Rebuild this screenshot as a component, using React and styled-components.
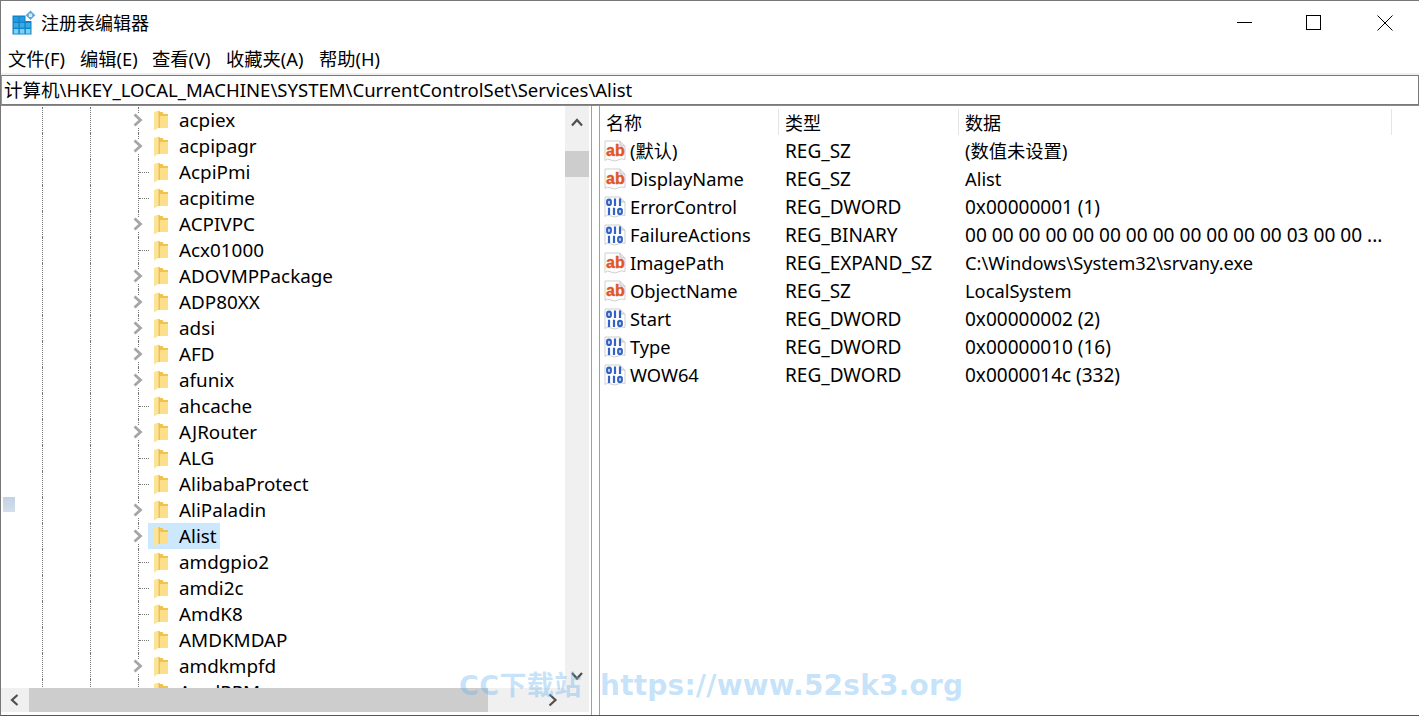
import React from "react";
import styled, { createGlobalStyle } from "styled-components";

const Global = createGlobalStyle`
  html, body { margin: 0; padding: 0; background: #fff; overflow: hidden; }
  * { box-sizing: border-box; }
`;
const FONT = `"Noto Sans", "Noto Sans CJK SC", sans-serif`;

const Window = styled.div`
  position: relative; width: 1419px; height: 716px; overflow: hidden;
  display: flex; flex-direction: column; background: #fff; color: #000;
  font-family: ${FONT};
  border-top: 1px solid #777; border-left: 1px solid #777; border-bottom: 1px solid #555;
`;
const TitleBar = styled.div`height: 43px; display: flex; align-items: center; padding-left: 11px; flex: none;`;
const Title = styled.div`margin-left: 5px; font-size: 18px; line-height: 24px; flex: 1;`;
const Controls = styled.div`display: grid; grid-template-columns: 69px 71px 16px; align-items: center; padding-right: 26px;`;
const MenuBar = styled.div`height: 29px; display: flex; align-items: center; padding-left: 7px; flex: none; background: #fff;`;
const MenuItem = styled.div`font-size: 18.3px; line-height: 24px; width: ${p => p.$w}px; white-space: nowrap;`;
const Strip = styled.div`height: 2px; background: #f0f0f0; flex: none;`;
const Address = styled.div`
  height: 30px; flex: none; border: 1px solid #7a7a7a; border-left-color: #999;
  font-size: 18.55px; line-height: 28px; padding-left: 2px; white-space: nowrap; background: #fff;
`;
const Panes = styled.div`flex: 1; min-height: 0; display: flex; border-top: 1px solid #8a8a8a;`;
const TreePane = styled.div`
  width: 591px; flex: none; border-right: 1px solid #a0a0a0; display: grid;
  grid-template-columns: 564px 24px 2px; grid-template-rows: 582px 24px 1fr;
`;
const Tree = styled.div`overflow: hidden; padding-left: 41px; padding-top: 1px;`;
const Row = styled.div`height: 26px; display: flex; align-items: stretch;`;
const Guide = styled.div`width: 48px; flex: none; border-left: 1px dotted #777;`;
const Elbow = styled.div`
  width: 10px; flex: none; position: relative; border-left: 1px dotted #777;
  &::after {
    content: ""; display: ${p => p.$branch ? "none" : "block"};
    position: absolute; left: 0; top: 13px; width: 10px; border-top: 1px dotted #777;
  }
`;
const Expander = styled.div`position: absolute; left: -7px; top: 6px; background: #fff; line-height: 0;`;
const Label = styled.div`
  display: flex; align-items: center; height: 26px; padding: 0 3px 0 6px;
  background: ${p => p.$sel ? "#cce8ff" : "transparent"};
`;
const LabelText = styled.span`margin-left: 11px; font-size: 18.85px; line-height: 26px; white-space: nowrap;`;
const VScroll = styled.div`
  background: #f0f0f0; display: flex; flex-direction: column; align-items: center; grid-column: 2;
`;
const ArrowBox = styled.div`height: ${p => p.$h}px; width: ${p => p.$w ?? 24}px; display: flex; align-items: center; justify-content: center; flex: none;`;
const VThumb = styled.div`width: 24px; height: 26px; background: #cdcdcd; flex: none;`;
const Spacer = styled.div`flex: 1;`;
const HScroll = styled.div`
  grid-column: 1 / 3; background: #f0f0f0; display: flex; align-items: stretch; padding-right: 24px;
`;
const HThumb = styled.div`width: 459px; background: #cdcdcd; flex: none;`;
const Splitter = styled.div`width: 7px; flex: none; background: #fff;`;
const ListPane = styled.div`flex: 1; border-left: 1px solid #a0a0a0; min-width: 0;`;
const HeaderRow = styled.div`display: grid; grid-template-columns: 179px 180px 433px; height: 31px;`;
const HeaderCell = styled.div`
  font-size: 18px; padding-left: 6px; border-right: 1px solid #e5e5e5;
  margin-top: 3px; height: 26px; line-height: 28px;
`;
const DataRow = styled.div`
  display: grid; grid-template-columns: 179px 180px 1fr; height: 28px; align-items: center;
  font-size: 18.3px; line-height: 28px; white-space: nowrap;
`;
const NameCell = styled.div`display: flex; align-items: center; padding-left: 4px;`;
const NameText = styled.span`margin-left: 4px;`;
const Cell = styled.div`padding-left: 6px; overflow: hidden; font-size: ${p => p.$size}px;`;
const Watermark = styled.div`
  position: absolute; left: 458px; top: 667px; display: flex; align-items: center;
  color: rgba(90, 175, 240, 0.36); line-height: 36px; white-space: nowrap; pointer-events: none;
`;
const WmBrand = styled.span`width: 141px; font-family: "DejaVu Sans", "Noto Sans CJK SC", sans-serif; font-weight: 700; font-size: 27px; letter-spacing: 0.4px;`;
const WmUrl = styled.span`font-family: "DejaVu Sans", sans-serif; font-weight: 700; font-size: 28px; letter-spacing: 0.2px;`;
const Speck = styled.div`
  position: absolute; left: 2px; top: 496px; width: 12px; height: 15px;
  background: linear-gradient(#c3d2e6, #d5deea);
`;

const AppIcon = () => (
  <svg width="24" height="26" viewBox="0 0 24 26" style={{ flex: "none" }}>
    <path d="M0.5 5.5 H13.5 V11 H19.5 V24.5 H0.5 Z" fill="#0f86c8" />
    {[0, 1, 2].map(r => [0, 1, 2].map(c => (r === 0 && c === 2 ? null : (
      <rect key={`${r}${c}`} x={1.8 + c * 6} y={7 + r * 6} width="4.6" height="4.6" fill={r === 2 ? "#7fd0f6" : r === 1 ? "#3ea9e4" : "#2a9ade"} />
    ))))}
    <path d="M18.5 0.5l4.8 4.8-4.8 4.8-4.8-4.8z" fill="#5aa7d8" />
    <rect x="16.8" y="3.6" width="3.4" height="3.4" fill="#d6ecf9" />
  </svg>
);
const Min = () => <svg width="16" height="16" style={{ display: "block" }}><path d="M0 7.5h15" stroke="#000" /></svg>;
const Max = () => <svg width="16" height="16" style={{ display: "block" }}><rect x="0.5" y="0.5" width="14" height="14" fill="none" stroke="#000" /></svg>;
const Close = () => <svg width="16" height="16" style={{ display: "block" }}><path d="M0.5 0.5l15 15M15.5 0.5l-15 15" stroke="#000" /></svg>;

const Folder = () => (
  <svg width="14" height="21" viewBox="0 0 14 21" style={{ flex: "none" }}>
    <path d="M4 2 H8.5 L9.5 4 H14 V18 H4 Z" fill="#fad772" />
    <path d="M5 2 H8.5 L9.5 4 H14 V6 H5 Z" fill="#f1c24f" />
    <rect x="5" y="6" width="9" height="12" fill="#fcdf88" />
    <path d="M0 2 L5 0.5 V17.5 L0 20.5 Z" fill="#fbe398" />
    <path d="M5.2 1 V18" stroke="#ebb945" strokeWidth="1.2" />
  </svg>
);
const ChevR = ({ c = "#a6a6a6", w = 2.8 }) => (
  <svg width="12" height="14" viewBox="0 0 12 14"><path d="M2.5 1.5 L8.5 7 L2.5 12.5" fill="none" stroke={c} strokeWidth={w} /></svg>
);
const ChevL = () => (
  <svg width="12" height="14" viewBox="0 0 12 14"><path d="M8.5 2 L3 7 L8.5 12" fill="none" stroke="#505050" strokeWidth="2.2" /></svg>
);
const ChevU = () => (
  <svg width="14" height="12" viewBox="0 0 14 12"><path d="M2 8.5 L7 3 L12 8.5" fill="none" stroke="#505050" strokeWidth="2.2" /></svg>
);
const ChevD = () => (
  <svg width="14" height="12" viewBox="0 0 14 12"><path d="M2 3 L7 8.5 L12 3" fill="none" stroke="#505050" strokeWidth="2.2" /></svg>
);
const Page = ({ children }) => (
  <svg width="22" height="22" viewBox="0 0 22 22" style={{ flex: "none" }}>
    <path d="M1 1 H16 L21 6 V19.5 Q17 18 14 20 T7 20 T1 20.5 Z" fill="#fff" stroke="#cfcfcf" strokeWidth="1" />
    <path d="M16 1 V6 H21" fill="#e4e4e4" stroke="#c8c8c8" strokeWidth="1" />
    {children}
  </svg>
);
const AbIcon = () => (
  <Page>
    <text x="2" y="16" fontFamily="'Liberation Sans', sans-serif" fontWeight="700" fontSize="16" stroke="#e0552a" strokeWidth="0.4" fill="#e0552a">ab</text>
  </Page>
);
const BinIcon = () => (
  <Page>
    <g fill="none" stroke="#3362c6" strokeWidth="2.2">
      <rect x="3.2" y="3.6" width="3.6" height="5.4" rx="1.7" />
      <path d="M11 2.6 V10 M16 2.6 V10" />
      <path d="M5 11.8 V19 M10 11.8 V19" />
      <rect x="14.2" y="12.8" width="3.6" height="5.2" rx="1.7" />
    </g>
  </Page>
);

const ITEMS = [
  ["acpiex", 1], ["acpipagr", 1], ["AcpiPmi", 0], ["acpitime", 0], ["ACPIVPC", 1], ["Acx01000", 0],
  ["ADOVMPPackage", 1], ["ADP80XX", 1], ["adsi", 1], ["AFD", 1], ["afunix", 1], ["ahcache", 0],
  ["AJRouter", 1], ["ALG", 0], ["AlibabaProtect", 0], ["AliPaladin", 1], ["Alist", 1], ["amdgpio2", 0],
  ["amdi2c", 0], ["AmdK8", 0], ["AMDKMDAP", 0], ["amdkmpfd", 1], ["AmdPPM", 0],
];
const VALUES = [
  ["ab", "(默认)", "REG_SZ", "(数值未设置)", 18.3],
  ["ab", "DisplayName", "REG_SZ", "Alist", 18.3],
  ["bin", "ErrorControl", "REG_DWORD", "0x00000001 (1)", 19],
  ["bin", "FailureActions", "REG_BINARY", "00 00 00 00 00 00 00 00 00 00 00 00 03 00 00 ...", 19.1],
  ["ab", "ImagePath", "REG_EXPAND_SZ", "C:\\Windows\\System32\\srvany.exe", 18.3],
  ["ab", "ObjectName", "REG_SZ", "LocalSystem", 18.3],
  ["bin", "Start", "REG_DWORD", "0x00000002 (2)", 19],
  ["bin", "Type", "REG_DWORD", "0x00000010 (16)", 19],
  ["bin", "WOW64", "REG_DWORD", "0x0000014c (332)", 19],
];
const MENUS = [["文件(F)", 72], ["编辑(E)", 72], ["查看(V)", 74], ["收藏夹(A)", 93], ["帮助(H)", 70]];

export default function App() {
  return (
    <Window>
      <Global />
      <TitleBar>
        <AppIcon />
        <Title>注册表编辑器</Title>
        <Controls>
          <Min /><Max /><Close />
        </Controls>
      </TitleBar>
      <MenuBar>
        {MENUS.map(([t, w]) => <MenuItem key={t} $w={w}>{t}</MenuItem>)}
      </MenuBar>
      <Strip />
      <Address>计算机\HKEY_LOCAL_MACHINE\SYSTEM\CurrentControlSet\Services\Alist</Address>
      <Panes>
        <TreePane>
          <Tree>
            {ITEMS.map(([name, branch]) => (
              <Row key={name}>
                <Guide /><Guide />
                <Elbow $branch={!!branch}>
                  {branch ? <Expander><ChevR /></Expander> : null}
                </Elbow>
                <Label $sel={name === "Alist"}>
                  <Folder />
                  <LabelText>{name}</LabelText>
                </Label>
              </Row>
            ))}
          </Tree>
          <VScroll>
            <ArrowBox $h={33}><ChevU /></ArrowBox>
            <ArrowBox $h={12} />
            <VThumb />
            <Spacer />
            <ArrowBox $h={24}><ChevD /></ArrowBox>
          </VScroll>
          <div />
          <HScroll>
            <ArrowBox $h={24} $w={28}><ChevL /></ArrowBox>
            <HThumb />
            <Spacer />
            <ArrowBox $h={24}><ChevR c="#505050" w={2.2} /></ArrowBox>
          </HScroll>
        </TreePane>
        <Splitter />
        <ListPane>
          <HeaderRow>
            <HeaderCell>名称</HeaderCell>
            <HeaderCell>类型</HeaderCell>
            <HeaderCell>数据</HeaderCell>
          </HeaderRow>
          {VALUES.map(([kind, name, type, data, size]) => (
            <DataRow key={name}>
              <NameCell>
                {kind === "ab" ? <AbIcon /> : <BinIcon />}
                <NameText>{name}</NameText>
              </NameCell>
              <Cell $size={19}>{type}</Cell>
              <Cell $size={size}>{data}</Cell>
            </DataRow>
          ))}
        </ListPane>
      </Panes>
      <Speck />
      <Watermark>
        <WmBrand>CC下载站</WmBrand>
        <WmUrl>https://www.52sk3.org</WmUrl>
      </Watermark>
    </Window>
  );
}
